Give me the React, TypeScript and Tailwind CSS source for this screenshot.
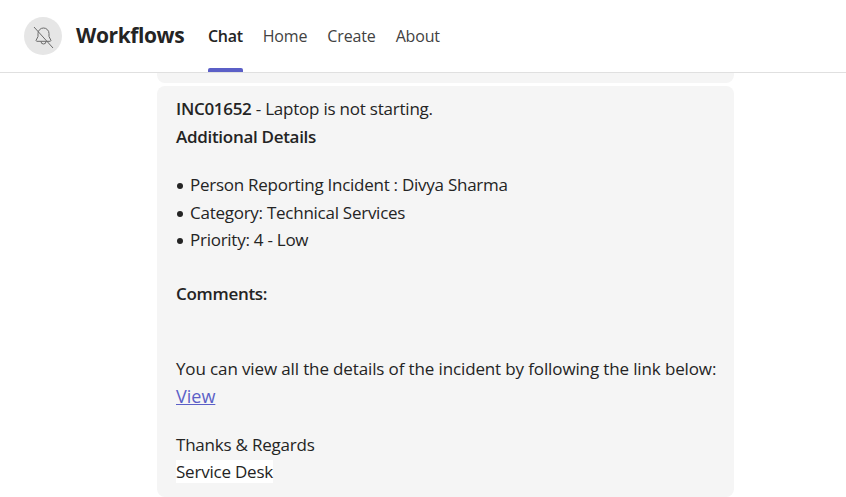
const font = { fontFamily: '"Open Sans", "Noto Sans", sans-serif' };

function NavItem({ label, active }: { label: string; active?: boolean }) {
  return (
    <div className="relative flex h-[72px] items-center">
      <span className={active ? 'text-[16px] font-semibold text-[#242424] tracking-[-0.3px]' : 'text-[16px] text-[#424242] tracking-[-0.15px]'}>
        {label}
      </span>
      {active && <div className="absolute bottom-0 left-0 right-0 h-[4px] rounded-t-[2px] bg-[#5b5fc7]" />}
    </div>
  );
}

function Bullet({ children }: { children: string }) {
  return (
    <p className="tracking-[-0.26px]">
      <span className="ml-px mr-[7px] inline-block h-[6px] w-[6px] rounded-full bg-[#242424] align-[2px]" />
      {children}
    </p>
  );
}

function MutedBell() {
  return (
    <svg width="28" height="28" viewBox="0 0 28 28" fill="none" stroke="#6b6b6b" strokeWidth="1">
      <path d="M9 11.5a5.5 5.5 0 0 1 11 0v3l1.8 3.6a.8.8 0 0 1-.7 1.2H7.9a.8.8 0 0 1-.7-1.2L9 14.5z" />
      <path d="M12 19.5a2.5 2.5 0 0 0 5 0" />
      <path d="M5 5l19 21" />
    </svg>
  );
}

export default function App() {
  return (
    <div className="h-[497px] w-[846px] overflow-hidden bg-white" style={font}>
      <header className="flex h-[73px] items-center border-b border-[#e0e0e0] pl-6">
        <div className="flex h-[38px] w-[38px] items-center justify-center rounded-full bg-[#e6e6e6]">
          <MutedBell />
        </div>
        <div className="ml-[14px] w-[132px] text-[21px] font-bold text-[#242424] tracking-[-0.4px]">Workflows</div>
        <nav className="flex gap-5">
          <NavItem label="Chat" active />
          <NavItem label="Home" />
          <NavItem label="Create" />
          <NavItem label="About" />
        </nav>
      </header>
      <main className="ml-[157px] w-[577px]">
        <div className="h-[10px] rounded-b-lg bg-[#f5f5f5]" />
        <div className="mt-[3px] h-[411px] rounded-lg bg-[#f5f5f5] pl-[19px] pr-2 pt-[9px] text-[17px] leading-[27.6px] text-[#242424] tracking-[-0.22px]">
          <p><b className="font-semibold tracking-[-0.3px]">INC01652</b> - Laptop is not starting.</p>
          <p className="font-semibold tracking-[-0.3px]">Additional Details</p>
          <div className="mt-[21px]">
            <Bullet>Person Reporting Incident : Divya Sharma</Bullet>
            <Bullet>Category: Technical Services</Bullet>
            <Bullet>Priority: 4 - Low</Bullet>
          </div>
          <p className="mt-[26px] font-semibold tracking-[-0.3px]">Comments:</p>
          <p className="mt-[47px] tracking-[-0.13px]">You can view all the details of the incident by following the link below:</p>
          <p className="pt-px"><a className="text-[18px] tracking-normal text-[#5b5fc7] underline">View</a></p>
          <p className="mt-[20px]">Thanks &amp; Regards</p>
          <p><span className="bg-white">Service Desk</span></p>
        </div>
      </main>
    </div>
  );
}
